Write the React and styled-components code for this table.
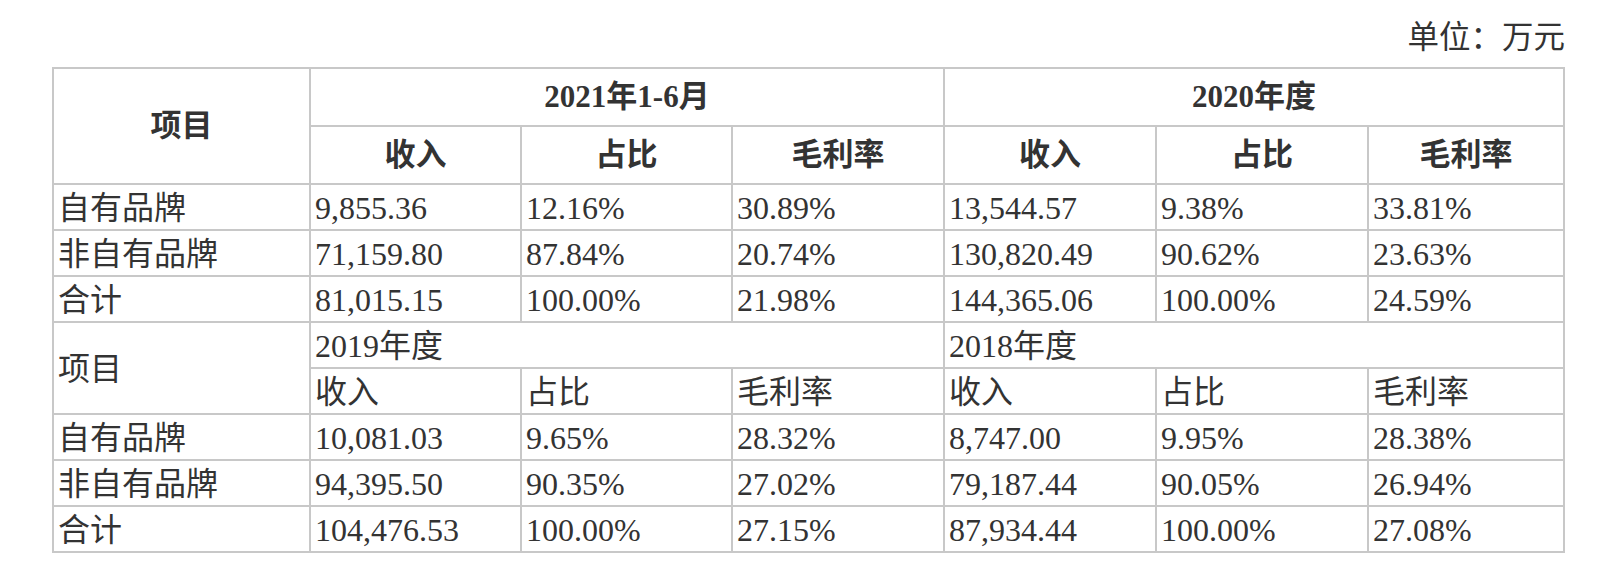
import React from "react";
import styled, { createGlobalStyle } from "styled-components";

const GlobalStyle = createGlobalStyle`
  html, body {
    margin: 0;
    padding: 0;
    background: #fff;
  }
  body {
    font-family: "Liberation Serif", "Noto Sans CJK SC", serif;
    color: #333;
  }
`;

const Page = styled.div`
  width: 1598px;
  box-sizing: border-box;
  padding: 16px 33px 0 52px;
`;

const Unit = styled.div`
  text-align: right;
  font-size: 31.5px;
  line-height: 44px;
  margin-bottom: 7px;
`;

const Table = styled.table`
  width: 1513px;
  border-collapse: collapse;
  table-layout: fixed;
  font-size: 32px;
  line-height: 1.15;
`;

const Col = styled.col`
  width: ${(p) => p.$w}px;
`;

const HeadCell = styled.th`
  border: 2px solid #c8c8c8;
  box-sizing: border-box;
  height: 58px;
  padding: 0 4px;
  font-weight: 700;
  font-size: 31px;
  text-align: center;
  vertical-align: middle;
  white-space: nowrap;
`;

const Cell = styled.td`
  border: 2px solid #c8c8c8;
  box-sizing: border-box;
  height: 46px;
  padding: 2px 4px 0;
  text-align: left;
  vertical-align: middle;
  white-space: nowrap;
`;

const widths = [257, 211, 211, 212, 212, 212, 196];
const metrics = ["收入", "占比", "毛利率"];

const top = {
  periods: ["2021年1-6月", "2020年度"],
  rows: [
    ["自有品牌", "9,855.36", "12.16%", "30.89%", "13,544.57", "9.38%", "33.81%"],
    ["非自有品牌", "71,159.80", "87.84%", "20.74%", "130,820.49", "90.62%", "23.63%"],
    ["合计", "81,015.15", "100.00%", "21.98%", "144,365.06", "100.00%", "24.59%"],
  ],
};

const bottom = {
  periods: ["2019年度", "2018年度"],
  rows: [
    ["自有品牌", "10,081.03", "9.65%", "28.32%", "8,747.00", "9.95%", "28.38%"],
    ["非自有品牌", "94,395.50", "90.35%", "27.02%", "79,187.44", "90.05%", "26.94%"],
    ["合计", "104,476.53", "100.00%", "27.15%", "87,934.44", "100.00%", "27.08%"],
  ],
};

const DataRows = ({ rows }) =>
  rows.map((r) => (
    <tr key={r[0]}>
      {r.map((v, i) => (
        <Cell key={i}>{v}</Cell>
      ))}
    </tr>
  ));

export default function App() {
  return (
    <>
      <GlobalStyle />
      <Page>
        <Unit>单位：万元</Unit>
        <Table>
          <colgroup>
            {widths.map((w, i) => (
              <Col key={i} $w={w} />
            ))}
          </colgroup>
          <tbody>
            <tr>
              <HeadCell rowSpan={2}>项目</HeadCell>
              {top.periods.map((p) => (
                <HeadCell key={p} colSpan={3}>{p}</HeadCell>
              ))}
            </tr>
            <tr>
              {[...metrics, ...metrics].map((m, i) => (
                <HeadCell key={i}>{m}</HeadCell>
              ))}
            </tr>
            <DataRows rows={top.rows} />
            <tr>
              <Cell rowSpan={2}>项目</Cell>
              {bottom.periods.map((p) => (
                <Cell key={p} colSpan={3}>{p}</Cell>
              ))}
            </tr>
            <tr>
              {[...metrics, ...metrics].map((m, i) => (
                <Cell key={i}>{m}</Cell>
              ))}
            </tr>
            <DataRows rows={bottom.rows} />
          </tbody>
        </Table>
      </Page>
    </>
  );
}
